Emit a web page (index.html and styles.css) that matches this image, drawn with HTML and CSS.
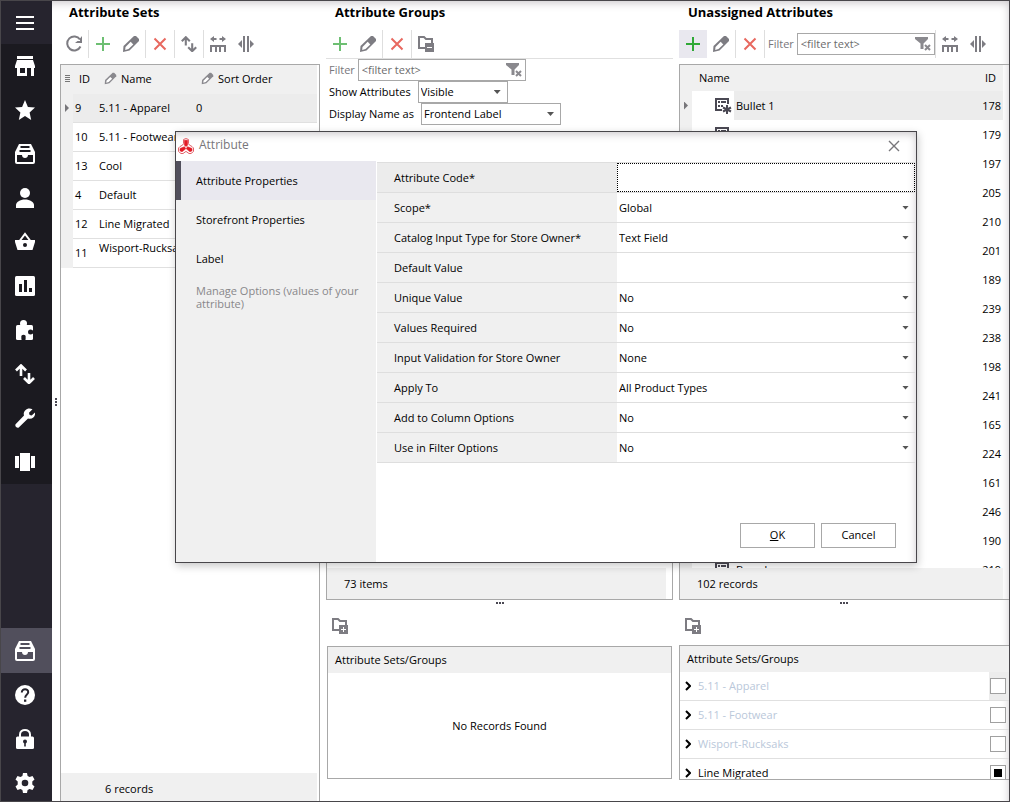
FILE: index.html
```
<!DOCTYPE html>
<html lang="en">
<head>
<meta charset="utf-8">
<title>Attribute Sets</title>
<link rel="stylesheet" href="styles.css">
</head>
<body>
<svg class="defs" aria-hidden="true">
  <symbol id="i-refresh" viewBox="0 0 18 18"><path d="M15 4.500A7 7 0 1 0 15.500 11.500" fill="none" stroke="currentColor" stroke-width="2"/><path d="M17 1v7h-7l2.500-2H15V3.500z" fill="currentColor"/></symbol>
  <symbol id="i-plus" viewBox="0 0 18 18"><path d="M9 2v14M2 9h14" stroke="currentColor" stroke-width="2"/></symbol>
  <symbol id="i-pencil" viewBox="0 0 18 18"><path d="M1 17l.500-6L12 1h2l3 3v2L7.500 15.500z" fill="currentColor"/><path d="M3.500 12L8.700 6.800l2.600 2.600L6.500 14l-3.300 1z" fill="#fff"/></symbol>
  <symbol id="i-cross" viewBox="0 0 18 18"><path d="M3.500 3.500l11 11M14.500 3.500l-11 11" stroke="currentColor" stroke-width="2"/></symbol>
  <symbol id="i-updown" viewBox="0 0 20 20"><path d="M6 12V2M1 6.500L6 1.500 11 6.500M14 9V19M9 14L14 19 19 14" fill="none" stroke="currentColor" stroke-width="2.600"/></symbol>
  <symbol id="i-fit" viewBox="0 0 18 18"><path d="M2 17v-6h14v6M7 11v6M11 11v6M3 4h4.500M10.500 4H15" fill="none" stroke="currentColor" stroke-width="2"/><path d="M1 4l4-3v6zM17 4l-4-3v6z" fill="currentColor"/></symbol>
  <symbol id="i-split" viewBox="0 0 18 18"><path d="M7 1v16M11 1v16" stroke="currentColor" stroke-width="2"/><path d="M1 9l4-4v8zM17 9l-4-4v8z" fill="currentColor"/></symbol>
  <symbol id="i-folder-minus" viewBox="0 0 18 18"><path d="M8 13H2V2h5l2 2h6v4" fill="none" stroke="currentColor" stroke-width="2"/><path d="M8 8h9v9H8z" fill="currentColor"/><path d="M10 12.500h5" stroke="#fff"/></symbol>
  <symbol id="i-folder-plus" viewBox="0 0 18 18"><path d="M8 13H2V2h5l2 2h6v4" fill="none" stroke="currentColor" stroke-width="2"/><path d="M8 8h9v9H8z" fill="currentColor"/><path d="M10 12.500h5M12.500 10v5" stroke="#fff"/></symbol>
  <symbol id="i-filter" viewBox="0 0 18 16"><path d="M1 1h13v2L9.500 7.500V13h-3V7.500L1 3z" fill="currentColor"/><path d="M11 9l5 5M16 9l-5 5" stroke="currentColor" stroke-width="2"/></symbol>
  <symbol id="i-attr" viewBox="0 0 18 18"><path d="M8 13H2V2h12v5" fill="none" stroke="currentColor" stroke-width="2"/><path d="M4 5h2M7 5h5M4 9h2M7 9h2" stroke="currentColor" stroke-width="2"/><path d="M13 8v9M9 10.500l8 4M17 10.500l-8 4" stroke="currentColor" stroke-width="2"/></symbol>
  <symbol id="i-chevron" viewBox="0 0 6 10"><path d="M1 1l4 4-4 4" fill="none" stroke="#000" stroke-width="2"/></symbol>
  <symbol id="i-inbox" viewBox="0 0 20 20"><path d="M4 0h12l4 8v10a2 2 0 0 1-2 2H2a2 2 0 0 1-2-2V8z" fill="currentColor"/><path d="M5.500 3h9M4.500 7h11" class="cut" stroke-width="2"/><path d="M2 11h5c0 2 1.300 3 3 3s3-1 3-3h5v7H2z" class="hole"/></symbol>
</svg>

<div class="app">
  <nav class="rail" aria-label="Main">
    <button class="rail-item rail-menu" aria-label="Menu"><svg viewBox="0 0 20 20"><path d="M1 4h18M1 10h18M1 16h18" stroke="currentColor" stroke-width="2"/></svg></button>
    <div class="rail-main">
      <button class="rail-item" aria-label="Store"><svg viewBox="0 0 20 20"><path d="M2 0h16v3H2zM2 4h16l2 6v2h-1v8h-3v-8h-4v8H2v-8H0v-2zM5 12v5h5v-5z" fill="currentColor" fill-rule="evenodd"/></svg></button>
      <button class="rail-item" aria-label="Favorites"><svg viewBox="0 0 20 20"><path d="M10 0l2.900 7 7.100.600-5.400 4.800L16.200 20 10 15.900 3.800 20l1.600-7.600L0 7.600 7.100 7z" fill="currentColor"/></svg></button>
      <button class="rail-item" aria-label="Catalog"><svg viewBox="0 0 20 20"><use href="#i-inbox"/></svg></button>
      <button class="rail-item" aria-label="Customers"><svg viewBox="0 0 20 20"><circle cx="10" cy="5" r="5" fill="currentColor"/><path d="M1 20v-3c0-3 4-5.500 9-5.500s9 2.500 9 5.500v3z" fill="currentColor"/></svg></button>
      <button class="rail-item" aria-label="Orders"><svg viewBox="0 0 20 20"><path d="M5 8.500L10 2l5 6.500" fill="none" stroke="currentColor" stroke-width="2"/><path d="M0 8h20v2l-2.500 8H2.500L0 10z" fill="currentColor"/><circle cx="10" cy="13" r="2" class="hole"/></svg></button>
      <button class="rail-item" aria-label="Reports"><svg viewBox="0 0 20 20"><rect width="20" height="20" rx="1.500" fill="currentColor"/><path d="M5.500 8v8M10.500 4v12M15.500 12v4" class="cut" stroke-width="3"/></svg></button>
      <button class="rail-item" aria-label="Add-ons"><svg viewBox="0 0 20 20"><circle cx="8.500" cy="3.500" r="3.500" fill="currentColor"/><rect x="1" y="5" width="17" height="15" rx="1.500" fill="currentColor"/><circle cx="15.500" cy="12" r="2.500" class="hole"/><path d="M15 10.500h4v3h-4zM6.500 18h4v3h-4z" class="hole"/><circle cx="8.500" cy="17" r="2.300" class="hole"/></svg></button>
      <button class="rail-item" aria-label="Import and export"><svg viewBox="0 0 20 20"><use href="#i-updown"/></svg></button>
      <button class="rail-item" aria-label="Tools"><svg viewBox="0 0 20 20"><path d="M17.500 1.200L14 4.700l.600 2.200 2.100.500L20 4.500c.600 4-2.500 7.200-7 6L4 19.300C2.500 21-1 18 .800 16L9 7.500C7.500 3 12.500-1.500 17.500 1.200z" fill="currentColor"/></svg></button>
      <button class="rail-item" aria-label="View"><svg viewBox="0 0 20 20"><path d="M5 1h10v18H5zM0 4h4v12H0zM16 4h4v12h-4z" fill="currentColor"/></svg></button>
    </div>
    <div class="rail-bottom">
      <button class="rail-item rail-active" aria-label="Attributes"><svg viewBox="0 0 20 20"><use href="#i-inbox"/></svg></button>
      <button class="rail-item" aria-label="Help"><svg viewBox="0 0 20 20"><circle cx="10" cy="10" r="10" fill="currentColor"/><path d="M6.800 7.500c0-4.500 6.700-4 6.400-.200C13 9.500 10.200 9.500 10.200 12.800" fill="none" class="cut" stroke-width="2"/><path d="M9 14.500h2.300v2.300H9z" class="hole"/></svg></button>
      <button class="rail-item" aria-label="Lock"><svg viewBox="0 0 20 20"><path d="M5 8V5.500C5 -.500 15 -.500 15 5.500V8" fill="none" stroke="currentColor" stroke-width="2"/><rect x="1" y="7.500" width="18" height="12.500" rx="1.500" fill="currentColor"/><circle cx="10" cy="12.500" r="2" class="hole"/><path d="M9.200 13h1.600v4.500H9.200z" class="hole"/></svg></button>
      <button class="rail-item" aria-label="Settings"><svg viewBox="0 0 20 20"><path d="M8 0h4l.600 3 2 1.100 2.900-1 2 3.500L17.300 8.600v2.800l2.200 2-2 3.500-2.900-1-2 1.100-.600 3H8l-.600-3-2-1.100-2.900 1-2-3.500 2.200-2V8.600L.500 6.600l2-3.500 2.900 1 2-1.100z" fill="currentColor"/><circle cx="10" cy="10" r="3.300" class="hole"/></svg></button>
    </div>
  </nav>

  <main class="panes">
    <div class="grip grip-side" aria-hidden="true"></div>

    <section class="pane">
      <h2>Attribute Sets</h2>
      <div class="toolbar">
        <button class="tool" aria-label="Refresh"><svg><use href="#i-refresh"/></svg></button>
        <button class="tool sep green" aria-label="Add set"><svg><use href="#i-plus"/></svg></button>
        <button class="tool" aria-label="Edit set"><svg><use href="#i-pencil"/></svg></button>
        <button class="tool sep red" aria-label="Delete set"><svg><use href="#i-cross"/></svg></button>
        <button class="tool sep small" aria-label="Sort"><svg><use href="#i-updown"/></svg></button>
        <button class="tool sep" aria-label="Fit columns"><svg><use href="#i-fit"/></svg></button>
        <button class="tool" aria-label="Split columns"><svg><use href="#i-split"/></svg></button>
      </div>
      <div class="frame sets">
        <table class="grid">
          <colgroup><col class="c-mark"><col class="c-id"><col class="c-name"><col></colgroup>
          <thead><tr><th><span class="lines"></span></th><th class="id-head">ID</th><th><span class="head-edit"><svg><use href="#i-pencil"/></svg>Name</span></th><th><span class="head-edit"><svg><use href="#i-pencil"/></svg>Sort Order</span></th></tr></thead>
          <tbody>
            <tr class="current"><td><span class="marker"></span></td><td>9</td><td>5.11 - Apparel</td><td>0</td></tr>
            <tr><td></td><td>10</td><td>5.11 - Footwear</td><td></td></tr>
            <tr><td></td><td>13</td><td>Cool</td><td></td></tr>
            <tr><td></td><td>4</td><td>Default</td><td></td></tr>
            <tr><td></td><td>12</td><td>Line Migrated</td><td></td></tr>
            <tr><td></td><td>11</td><td class="high">Wisport-Rucksaks</td><td></td></tr>
          </tbody>
        </table>
        <div class="frame-foot sets-foot">6 records</div>
      </div>
    </section>

    <section class="pane">
      <h2>Attribute Groups</h2>
      <div class="toolbar ruled">
        <button class="tool green" aria-label="Add group"><svg><use href="#i-plus"/></svg></button>
        <button class="tool" aria-label="Edit group"><svg><use href="#i-pencil"/></svg></button>
        <button class="tool sep red" aria-label="Delete group"><svg><use href="#i-cross"/></svg></button>
        <button class="tool sep" aria-label="Collapse all"><svg><use href="#i-folder-minus"/></svg></button>
      </div>
      <div class="field tight"><label class="muted" for="gfilter">Filter</label><span class="filter wide"><input id="gfilter" placeholder="&lt;filter text&gt;"><svg><use href="#i-filter"/></svg></span></div>
      <div class="field"><label for="show">Show Attributes</label><span class="drop boxed short"><select id="show"><option>Visible</option></select></span></div>
      <div class="field"><label for="disp">Display Name as</label><span class="drop boxed long"><select id="disp"><option>Frontend Label</option></select></span></div>
      <div class="frame upper groups">
        <div class="frame-foot">73 items</div>
      </div>
      <div class="grip grip-row" aria-hidden="true"></div>
      <div class="lower-tools"><button class="tool" aria-label="Expand all"><svg><use href="#i-folder-plus"/></svg></button></div>
      <div class="frame lower inset">
        <div class="list-head">Attribute Sets/Groups</div>
        <p class="empty">No Records Found</p>
      </div>
    </section>

    <section class="pane">
      <h2>Unassigned Attributes</h2>
      <div class="toolbar">
        <button class="tool green lit" aria-label="Add attribute"><svg><use href="#i-plus"/></svg></button>
        <button class="tool" aria-label="Edit attribute"><svg><use href="#i-pencil"/></svg></button>
        <button class="tool sep red" aria-label="Delete attribute"><svg><use href="#i-cross"/></svg></button>
        <span class="tool-field sep"><label class="muted" for="ufilter">Filter</label><span class="filter"><input id="ufilter" placeholder="&lt;filter text&gt;"><svg><use href="#i-filter"/></svg></span></span>
        <button class="tool sep" aria-label="Fit columns"><svg><use href="#i-fit"/></svg></button>
        <button class="tool" aria-label="Split columns"><svg><use href="#i-split"/></svg></button>
      </div>
      <div class="frame upper open">
        <div class="clip">
        <table class="grid plain">
          <colgroup><col class="c-mark"><col class="c-icon"><col><col class="c-num"></colgroup>
          <thead><tr><th></th><th colspan="2" class="name-head">Name</th><th class="num">ID</th></tr></thead>
          <tbody>
            <tr class="current"><td><span class="marker"></span></td><td class="icon"><svg><use href="#i-attr"/></svg></td><td>Bullet 1</td><td class="num">178</td></tr>
            <tr><td></td><td class="icon"><svg><use href="#i-attr"/></svg></td><td>Bullet 2</td><td class="num">179</td></tr>
            <tr><td></td><td></td><td></td><td class="num">197</td></tr>
            <tr><td></td><td></td><td></td><td class="num">205</td></tr>
            <tr><td></td><td></td><td></td><td class="num">210</td></tr>
            <tr><td></td><td></td><td></td><td class="num">201</td></tr>
            <tr><td></td><td></td><td></td><td class="num">189</td></tr>
            <tr><td></td><td></td><td></td><td class="num">239</td></tr>
            <tr><td></td><td></td><td></td><td class="num">238</td></tr>
            <tr><td></td><td></td><td></td><td class="num">198</td></tr>
            <tr><td></td><td></td><td></td><td class="num">241</td></tr>
            <tr><td></td><td></td><td></td><td class="num">165</td></tr>
            <tr><td></td><td></td><td></td><td class="num">224</td></tr>
            <tr><td></td><td></td><td></td><td class="num">161</td></tr>
            <tr><td></td><td></td><td></td><td class="num">246</td></tr>
            <tr><td></td><td></td><td></td><td class="num">190</td></tr>
            <tr><td></td><td class="icon"><svg><use href="#i-attr"/></svg></td><td>Brand</td><td class="num">219</td></tr>
          </tbody>
        </table>
        </div>
        <div class="frame-foot">102 records</div>
      </div>
      <div class="grip grip-row" aria-hidden="true"></div>
      <div class="lower-tools"><button class="tool" aria-label="Expand all"><svg><use href="#i-folder-plus"/></svg></button></div>
      <div class="frame lower open">
        <div class="list-head">Attribute Sets/Groups</div>
        <div class="check-row"><svg class="chev"><use href="#i-chevron"/></svg><label class="faded" for="k1">5.11 - Apparel</label><span class="check-cell on"><input type="checkbox" id="k1"></span></div>
        <div class="check-row"><svg class="chev"><use href="#i-chevron"/></svg><label class="faded" for="k2">5.11 - Footwear</label><span class="check-cell"><input type="checkbox" id="k2"></span></div>
        <div class="check-row"><svg class="chev"><use href="#i-chevron"/></svg><label class="faded" for="k3">Wisport-Rucksaks</label><span class="check-cell"><input type="checkbox" id="k3"></span></div>
        <div class="check-row"><svg class="chev"><use href="#i-chevron"/></svg><label for="k4">Line Migrated</label><span class="check-cell"><input type="checkbox" id="k4" checked></span></div>
      </div>
    </section>
  </main>

  <div class="dialog" role="dialog" aria-labelledby="dlg-title">
    <header class="dialog-head">
      <svg class="logo" viewBox="0 0 16 16"><path d="M5.500 1.500l2.500-1 2.500 1v4l.800 1.500 2.700 1.500 1.500 1.500v3.500L13 15.500h-2L8 13.400 5 15.500H3L.500 13.500V10L2 8.500 4.700 7l.800-1.500z" fill="#fff" stroke="#e2626a"/><path d="M6.500 2.300h3v5L8 8.500 6.500 7.300zM6.500 8.700L7.700 10.800 4 13.800 2 12.800V10.500zM9.500 8.700L8.300 10.800 12 13.800l2-1V10.500z" fill="#e31b26" stroke="#e31b26" stroke-width=".6"/></svg>
      <h1 id="dlg-title">Attribute</h1>
      <button class="close" aria-label="Close"><svg viewBox="0 0 12 12"><path d="M1 1l10 10M11 1L1 11" stroke="currentColor" stroke-width="1.400"/></svg></button>
    </header>
    <div class="dialog-body">
      <nav class="tabs" aria-label="Sections">
        <a href="#" class="tab tab-on">Attribute Properties</a>
        <a href="#" class="tab">Storefront Properties</a>
        <a href="#" class="tab">Label</a>
        <a href="#" class="tab tab-off">Manage Options (values of your attribute)</a>
      </nav>
      <form class="props">
        <div class="prop focus"><label for="p1">Attribute Code*</label><input id="p1"></div>
        <div class="prop"><label for="p2">Scope*</label><span class="drop"><select id="p2"><option>Global</option></select></span></div>
        <div class="prop"><label for="p3">Catalog Input Type for Store Owner*</label><span class="drop"><select id="p3"><option>Text Field</option></select></span></div>
        <div class="prop"><label for="p4">Default Value</label><input id="p4"></div>
        <div class="prop"><label for="p5">Unique Value</label><span class="drop"><select id="p5"><option>No</option></select></span></div>
        <div class="prop"><label for="p6">Values Required</label><span class="drop"><select id="p6"><option>No</option></select></span></div>
        <div class="prop"><label for="p7">Input Validation for Store Owner</label><span class="drop"><select id="p7"><option>None</option></select></span></div>
        <div class="prop"><label for="p8">Apply To</label><span class="drop"><select id="p8"><option>All Product Types</option></select></span></div>
        <div class="prop"><label for="p9">Add to Column Options</label><span class="drop"><select id="p9"><option>No</option></select></span></div>
        <div class="prop"><label for="p10">Use in Filter Options</label><span class="drop"><select id="p10"><option>No</option></select></span></div>
        <div class="actions">
          <button type="button" class="btn"><u>O</u>K</button>
          <button type="button" class="btn">Cancel</button>
        </div>
      </form>
    </div>
  </div>
</div>
</body>
</html>
```
FILE: styles.css
```
* { box-sizing: border-box; }
body { margin: 0; color: #000; font: 11px/16px "Open Sans", "Noto Sans", sans-serif; }
button, input, select { font: inherit; color: inherit; margin: 0; padding: 0; border: 0; background: none; border-radius: 0; outline: 0; }
h1, h2, p { margin: 0; }
svg { display: block; flex: none; }
.defs { display: none; }

.app { display: flex; position: relative; height: 100vh; border: 1px solid #48464a; background: #fff; overflow: hidden; }

.rail { --rail: #26242e; display: flex; flex-direction: column; flex: none; width: 51px; background: var(--rail); color: #fff; }
.rail-item { display: flex; align-items: center; width: 100%; height: 44px; padding-left: 14px; }
.rail-item svg { width: 20px; height: 20px; }
.rail-menu { height: 43px; }
.rail-main { --rail: #1b1a20; background: var(--rail); }
.rail-bottom { margin: auto 0 -4px; }
.rail-active { --rail: #514f5c; height: 45px; background: var(--rail); }
.hole { fill: var(--rail); }
.cut { stroke: var(--rail); }

.panes { position: relative; flex: 1; min-width: 0; display: grid; grid-template-columns: 260fr 347fr 330fr; gap: 6px; padding-left: 8px; box-shadow: inset -4px 6px 8px -4px #ccc9cc; }
.pane { display: flex; flex-direction: column; min-width: 0; min-height: 0; }
h2 { height: 29px; padding: 2px 0 0 9px; font-size: 13px; line-height: 18px; font-weight: 700; }
.toolbar { display: flex; height: 28px; flex: none; margin-bottom: 6px; }
.ruled { height: 29px; margin-bottom: 0; border-bottom: 1px solid #e0e0e0; }
.tool { display: flex; align-items: center; justify-content: center; flex: none; width: 28px; height: 28px; color: #7d7c82; }
.tool svg { width: 18px; height: 18px; }
.small svg { width: 16px; height: 16px; }
.sep { box-sizing: content-box; border-left: 1px solid #dedede; }
.green { color: #6dbf72; }
.red { color: #e8685f; }
.lit { background: #e9e8ef; color: #2fa836; }
.tool-field { display: flex; flex: 1; align-items: center; gap: 3px; padding-left: 3px; min-width: 0; }
.tool-field + .tool + .tool { margin-right: 17px; }
.muted { color: #77767a; }

.filter { display: flex; flex: 1; align-items: center; min-width: 0; height: 22px; border: 1px solid #a8a8a8; background: #fff; padding: 0 2px 0 3px; }
.filter input { flex: 1; min-width: 0; }
.filter input::placeholder { color: #6b6b6b; opacity: 1; }
.filter svg { width: 18px; height: 16px; color: #8a898e; }
.filter.wide { flex: none; width: 168px; }
.field { display: flex; align-items: center; gap: 7px; height: 22px; flex: none; padding-left: 3px; }
.tight { gap: 3px; }

.drop { display: grid; align-items: center; position: relative; }
.drop select { appearance: none; width: 100%; height: 100%; padding: 0 20px 0 2px; }
.drop::after { content: ""; position: absolute; right: 6px; top: 50%; width: 7px; height: 4px; margin-top: -2px; background: #555; clip-path: polygon(0 0, 100% 0, 50% 100%); pointer-events: none; }
.boxed { height: 22px; border: 1px solid #a8a8a8; background: #fff; }
.short { width: 90px; }
.long { width: 140px; }

.frame { display: flex; flex-direction: column; min-height: 0; border: 1px solid #a8a8a8; overflow: hidden; }
.sets { flex: 1; border-bottom: 0; }
.open { border-right: 0; }
.upper { flex: 1; }
.groups { margin-top: 8px; }
.clip { flex: 1; min-height: 0; overflow: hidden; }
.frame-foot { height: 31px; flex: none; margin: auto 6px 0 0; padding-left: 17px; background: #f0f0f0; line-height: 31px; }
.sets-foot { height: 28px; margin-right: 2px; padding-left: 44px; }

.grid { width: calc(100% - 2px); table-layout: fixed; border-collapse: separate; border-spacing: 0; }
.grid th, .grid td { height: 29px; padding: 0 2px; text-align: left; font-weight: 400; white-space: nowrap; overflow: hidden; border-bottom: 1px solid #e0e0e0; }
.grid thead th { padding-bottom: 2px; background: #f0f0f0; border-bottom: 0; }
.grid tbody td:first-child { padding: 0; background: #f0f0f0; border-bottom-color: #f0f0f0; }
.grid .current td { background: #ececec; }
.grid td.high { vertical-align: top; padding-top: 1px; line-height: 16px; }
.c-mark { width: 12px; }
.c-id { width: 24px; }
.c-name { width: 97px; }
.grid .id-head { padding-left: 6px; }
.head-edit { display: flex; align-items: center; gap: 4px; padding-left: 5px; }
.head-edit svg { width: 13px; height: 13px; color: #8a898e; }
.lines { display: block; width: 5px; height: 7px; margin-left: 2px; background: repeating-linear-gradient(#777 0 1px, #f0f0f0 1px 2px); }
.marker { display: block; width: 4px; height: 8px; margin-left: 4px; background: #77767a; clip-path: polygon(0 0, 100% 50%, 0 100%); }
.plain { width: calc(100% - 6px); }
.plain thead th { height: 26px; padding-bottom: 0; }
.plain td { border-bottom: 0; }
.plain .current .icon { background: #fff; }
.grid .icon { padding: 0 0 0 22px; }
.icon svg { width: 18px; height: 18px; color: #4a4853; }
.c-icon { width: 42px; }
.c-num { width: 40px; }
.grid .num { text-align: right; }
.grid th.num { padding-right: 7px; }
.grid .name-head { padding-left: 7px; }

.grip { background: repeating-linear-gradient(90deg, #4a4853 0 2px, transparent 2px 3px); }
.grip-side { position: absolute; left: 3px; top: 50%; width: 2px; height: 8px; margin-top: -3px; background: repeating-linear-gradient(#4a4853 0 2px, transparent 2px 3px); }
.grip-row { align-self: center; flex: none; width: 8px; height: 2px; margin: 2px 0; }
.lower-tools { height: 39px; flex: none; padding-top: 6px; }
.lower { height: 135px; flex: none; margin-bottom: 21px; }
.inset { height: 133px; margin: 1px 1px 22px; }
.list-head { height: 26px; flex: none; padding-left: 7px; line-height: 26px; background: #f0f0f0; }
.empty { flex: 1; display: flex; align-items: center; justify-content: center; }
.check-row { display: flex; align-items: center; height: 29px; flex: none; padding-left: 5px; border-bottom: 1px solid #e0e0e0; }
.chev { width: 6px; height: 10px; margin-right: 7px; }
.faded { color: #bac8da; }
.check-cell { display: flex; align-items: center; width: 20px; height: 28px; margin-left: auto; padding-left: 1px; }
.on { background: #ececec; }
input[type="checkbox"] { appearance: none; width: 16px; height: 16px; border: 1px solid #a0a0a0; background: #fff; }
input[type="checkbox"]:checked { background: #000; box-shadow: inset 0 0 0 3px #fff; }

.dialog { position: absolute; left: 174px; top: 130px; display: flex; flex-direction: column; width: 742px; height: 432px; border: 1px solid #48464a; background: #fff; box-shadow: 1px 3px 8px rgba(0, 0, 0, .22), inset -4px 6px 8px -4px #ccc9cc; }
.dialog-head { display: flex; align-items: center; height: 29px; padding: 0 16px 1px 2px; flex: none; }
.logo { width: 16px; height: 16px; }
h1 { flex: 1; padding: 0 0 2px 5px; font-size: 12px; font-weight: 400; color: #77767a; }
.close { display: flex; padding: 0; color: #77767a; }
.close svg { width: 12px; height: 12px; }
.dialog-body { display: flex; flex: 1; min-height: 0; gap: 1px; }
.tabs { width: 200px; flex: none; background: #f0f0f0; }
.tab { display: flex; align-items: center; height: 39px; padding: 0 10px 0 20px; color: #000; text-decoration: none; line-height: 13px; }
.tab-on { padding-left: 15px; border-left: 5px solid #514f5c; background: #e9e8ef; }
.tab-off { padding-bottom: 2px; color: #88878a; }
.props { display: flex; flex-direction: column; flex: 1; min-width: 0; padding: 1px 1px 0 0; }
.prop { display: grid; grid-template-columns: 240px 1fr; height: 30px; flex: none; border-top: 1px solid #dedede; }
.prop label { display: flex; align-items: center; padding-left: 17px; background: #f0f0f0; }
.prop .drop select, .prop input { width: 100%; min-width: 0; padding-left: 2px; }
.focus label { background: #ececec; }
.prop.focus input { border: 1px dotted #000; }
.prop:nth-child(10) { height: 31px; border-bottom: 1px solid #dedede; }
.actions { display: flex; justify-content: flex-end; gap: 6px; margin: auto 19px 14px 0; }
.btn { width: 75px; height: 25px; padding-bottom: 1px; border: 1px solid #a8a8a8; background: #fff; }
```
